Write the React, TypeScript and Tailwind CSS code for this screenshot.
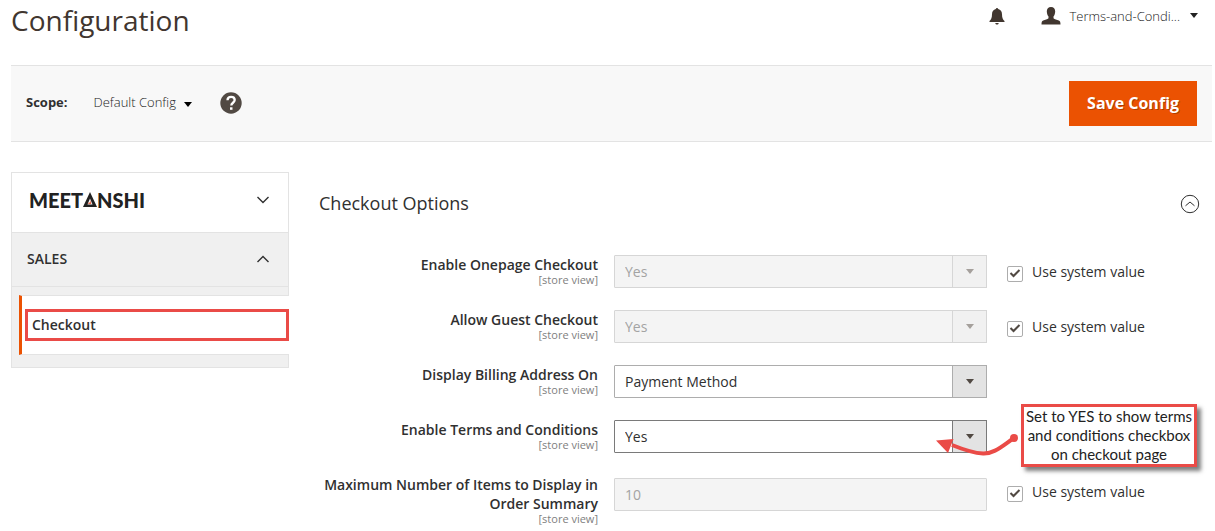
import { useState } from 'react';
import type { ReactNode } from 'react';

type Field = {
  id: string;
  label: string;
  value: string;
  kind: 'select' | 'text';
  useDefault?: boolean;
  focused?: boolean;
};

const FIELDS: Field[] = [
  { id: 'onepage', label: 'Enable Onepage Checkout', value: 'Yes', kind: 'select', useDefault: true },
  { id: 'guest', label: 'Allow Guest Checkout', value: 'Yes', kind: 'select', useDefault: true },
  { id: 'billing', label: 'Display Billing Address On', value: 'Payment Method', kind: 'select' },
  { id: 'terms', label: 'Enable Terms and Conditions', value: 'Yes', kind: 'select', focused: true },
  { id: 'max-items', label: 'Maximum Number of Items to Display in Order Summary', value: '10', kind: 'text', useDefault: true },
];

const OPTIONS: Record<string, string[]> = {
  billing: ['Payment Method', 'Payment Page'],
};

function Caret({ className }: { className?: string }) {
  return (
    <svg className={className} width="8" height="5" viewBox="0 0 8 5" fill="currentColor" aria-hidden="true">
      <path d="M0 0h8L4 5z" />
    </svg>
  );
}

function Chevron({ up }: { up?: boolean }) {
  return (
    <svg width="12" height="8" viewBox="0 0 12 8" fill="none" stroke="#303030" strokeWidth="1.4" aria-hidden="true">
      <path d={up ? 'M.5 7 6 1.5 11.5 7' : 'M.5 1 6 6.5 11.5 1'} />
    </svg>
  );
}

function Logo() {
  return (
    <span className="flex items-center font-['Lato',sans-serif] text-xl leading-6 font-black text-[#222]">
      MEET
      <svg width="14" height="15" viewBox="0 0 14 15" aria-hidden="true">
        <path d="M7 0 14 15H0z" fill="#222" />
        <path d="M7 6.500 9.500 12.400h-5z" fill="#fff" />
        <path d="M7.300 8 8.300 12H5.100l.6-1.600h1.200z" fill="#e8694a" />
      </svg>
      NSHI
    </span>
  );
}

function Header() {
  return (
    <header className="flex h-[65px] items-start justify-between">
      <h1 className="pt-0.5 text-[28px] leading-9 text-[#41362f]">Configuration</h1>
      <div className="flex items-center pt-1.5 pr-3.5">
        <button type="button" aria-label="Notifications" className="mr-9 pt-0.5 text-[#41362f]">
          <svg width="16" height="17" viewBox="0 0 16 17" fill="currentColor">
            <path d="M8 0c.7 0 1.100.4 1.200 1C11.500 1.600 13 3.600 13 6.200c0 3.800 1 5.600 2.500 6.800V14H.5v-1C2 11.800 3 10 3 6.200 3 3.600 4.500 1.600 6.800 1 6.900.4 7.300 0 8 0zM6.300 15h3.400c-.1 1-.8 1.600-1.700 1.600S6.400 16 6.300 15z" />
          </svg>
        </button>
        <button type="button" className="flex items-center text-[13px] leading-[18px] font-light text-[#222]">
          <svg className="mr-2 text-[#41362f]" width="20" height="18" viewBox="0 0 20 18" fill="currentColor" aria-hidden="true">
            <path d="M10 0c2.700 0 4.300 1.800 4.200 4.500-.1 1.800-.6 3.700-1.700 5v1.700c1.100 1 3.300 1.400 5.300 2.200 1.300.6 1.700 1.600 1.700 4.100H.5c0-2.500.4-3.500 1.700-4.100 2-.8 4.200-1.200 5.300-2.200V9.500c-1.100-1.300-1.600-3.200-1.700-5C5.700 1.800 7.300 0 10 0z" />
          </svg>
          Terms-and-Condi...
          <Caret className="ml-2.5" />
        </button>
      </div>
    </header>
  );
}

function ScopeBar() {
  return (
    <div className="flex items-center justify-between border-y border-[#e3e3e3] bg-[#f8f8f8] p-[15px]">
      <div className="flex items-center pb-0.5">
        <span id="scope-label" className="text-[13px] font-bold text-[#303030]">Scope:</span>
        <button type="button" aria-describedby="scope-label" className="ml-[26px] flex items-center text-[13px] font-light text-[#222]">
          Default Config
          <Caret className="mt-1 ml-2 text-black" />
        </button>
        <button type="button" aria-label="Help" className="ml-7">
          <svg width="22" height="22" viewBox="0 0 22 22">
            <circle cx="11" cy="11" r="10.700" fill="#514943" />
            <path d="M7.500 8.300C7.500 6.200 9 4.900 11.100 4.900s3.600 1.200 3.600 3.100c0 2.700-3.400 2.800-3.400 5.500" fill="none" stroke="#fff" strokeWidth="2.300" />
            <path d="M10 15.300h2.500v2.500H10z" fill="#fff" />
          </svg>
        </button>
      </div>
      <button
        type="button"
        className="bg-[#eb5202] px-[18px] py-2.5 text-base leading-[25px] font-bold text-white [text-shadow:1px_1px_0_rgba(0,0,0,0.25)]"
      >
        Save Config
      </button>
    </div>
  );
}

function Sidebar() {
  return (
    <nav className="w-[278px] shrink-0 self-start border border-[#e3e3e3] bg-[#f0f0f0] pb-3">
      <button type="button" aria-label="Meetanshi" className="flex h-[59px] w-full items-center justify-between bg-white pr-[19px] pb-1.5 pl-[17px]">
        <Logo />
        <Chevron />
      </button>
      <button
        type="button"
        aria-expanded="true"
        className="flex h-[55px] w-full items-center justify-between border-y border-[#e3e3e3] pr-[19px] pb-0.5 pl-[15px] text-sm font-semibold text-[#303030]"
      >
        SALES
        <Chevron up />
      </button>
      <div className="-mr-px mt-2 ml-[7px] border-y border-l-3 border-y-[#e3e3e3] border-l-[#eb5202] bg-white py-[13px] pl-[3px]">
        <a href="#checkout" className="block border-3 border-[#ea4b47] px-1 py-0.5 text-sm leading-[22px] font-semibold text-[#303030]">
          Checkout
        </a>
      </div>
    </nav>
  );
}

function SelectBox({ field, disabled }: { field: Field; disabled: boolean }) {
  const border = disabled ? 'border-[#d6d6d6]' : field.focused ? 'border-[#7a7a7a]' : 'border-[#adadad]';
  return (
    <div className="relative h-[33px]">
      <select
        id={field.id}
        disabled={disabled}
        defaultValue={field.value}
        className={`h-full w-full appearance-none rounded-[1px] border px-2.5 text-sm outline-none ${border} ${
          disabled ? 'bg-[#f4f4f4] text-[#a3a3a3] opacity-100' : 'bg-white text-[#303030]'
        }`}
      >
        {(OPTIONS[field.id] ?? ['Yes', 'No']).map(option => (
          <option key={option}>{option}</option>
        ))}
      </select>
      <span
        className={`pointer-events-none absolute inset-y-0 right-0 flex w-[35px] items-center justify-center border ${border} ${
          disabled ? 'bg-[#f1f1f1] text-[#a5a09c]' : 'bg-[#e3e3e3] text-[#514943]'
        }`}
      >
        <Caret />
      </span>
    </div>
  );
}

function Callout({ children }: { children: ReactNode }) {
  return (
    <div className="absolute -top-4 left-[18px] z-10">
      <svg className="absolute top-7 -left-[86px]" width="90" height="34" viewBox="0 0 90 34" fill="none" aria-hidden="true">
        <path d="M79 6C67 14 59 22 48 21.500 37 21 28 17.500 17 13" stroke="#ea4b47" strokeWidth="4" />
        <circle cx="79" cy="6" r="4" fill="#ea4b47" />
        <path d="M1 8.500 18.500 7 13 21z" fill="#ea4b47" />
      </svg>
      <p className="w-44 border-3 border-[#ea4b47] bg-white text-center font-['Lato',sans-serif] text-[15px] leading-[19px] text-[#222] shadow-[4px_4px_4px_rgba(0,0,0,0.5)]">
        {children}
      </p>
    </div>
  );
}

function FieldRow({ field }: { field: Field }) {
  const [inherit, setInherit] = useState(Boolean(field.useDefault));

  return (
    <div className="grid grid-cols-[279fr_373fr_209fr] gap-4">
      <label htmlFor={field.id} className="text-right text-sm leading-[19px] font-semibold text-[#303030]">
        {field.label}
        <span className="block text-[11px] leading-3 font-normal text-[#808080]">[store view]</span>
      </label>
      {field.kind === 'select' ? (
        <SelectBox field={field} disabled={inherit} />
      ) : (
        <input
          id={field.id}
          type="text"
          disabled={inherit}
          defaultValue={field.value}
          className="mt-[3px] h-[33px] w-full min-w-0 rounded-[1px] border border-[#d6d6d6] bg-[#f4f4f4] px-2.5 text-sm text-[#a3a3a3]"
        />
      )}
      <div className="relative pl-1">
        {field.useDefault && (
          <label className="flex items-start text-sm leading-[19px] text-[#303030]">
            <span className="relative mt-[11px] mr-[9px] size-4">
              <input
                type="checkbox"
                checked={inherit}
                onChange={e => setInherit(e.target.checked)}
                className="peer block size-4 appearance-none rounded-xs border border-[#adadad] bg-white"
              />
              <svg
                className="pointer-events-none absolute inset-0 hidden peer-checked:block"
                width="16"
                height="16"
                viewBox="0 0 16 16"
                fill="none"
                stroke="#514943"
                strokeWidth="2"
                aria-hidden="true"
              >
                <path d="M3.500 7 6.500 10 12.500 4" />
              </svg>
            </span>
            <span className="mt-[7px]">Use system value</span>
          </label>
        )}
        {field.focused && (
          <Callout>
            Set to YES to show terms
            <br />
            and conditions checkbox
            <br />
            on checkout page
          </Callout>
        )}
      </div>
    </div>
  );
}

export default function App() {
  return (
    <div className="overflow-x-hidden bg-white pr-[3px] pl-[11px] font-['Open_Sans',sans-serif]">
      <Header />
      <ScopeBar />
      <div className="flex gap-[30px] pt-[30px]">
        <Sidebar />
        <main className="min-w-0 flex-1">
          <div className="flex items-center justify-between pt-[19px] pr-3">
            <h2 className="text-lg leading-6 font-medium text-[#303030]">Checkout Options</h2>
            <button type="button" aria-label="Collapse section" className="pt-0.5">
              <svg width="20" height="20" viewBox="0 0 20 20" fill="none" stroke="#303030">
                <circle cx="10" cy="10" r="8.700" />
                <path d="M5.500 11.800 10 8l4.500 3.800" />
              </svg>
            </button>
          </div>
          <div className="mt-10 flex flex-col gap-[22px]">
            {FIELDS.map(field => (
              <FieldRow key={field.id} field={field} />
            ))}
          </div>
        </main>
      </div>
    </div>
  );
}
